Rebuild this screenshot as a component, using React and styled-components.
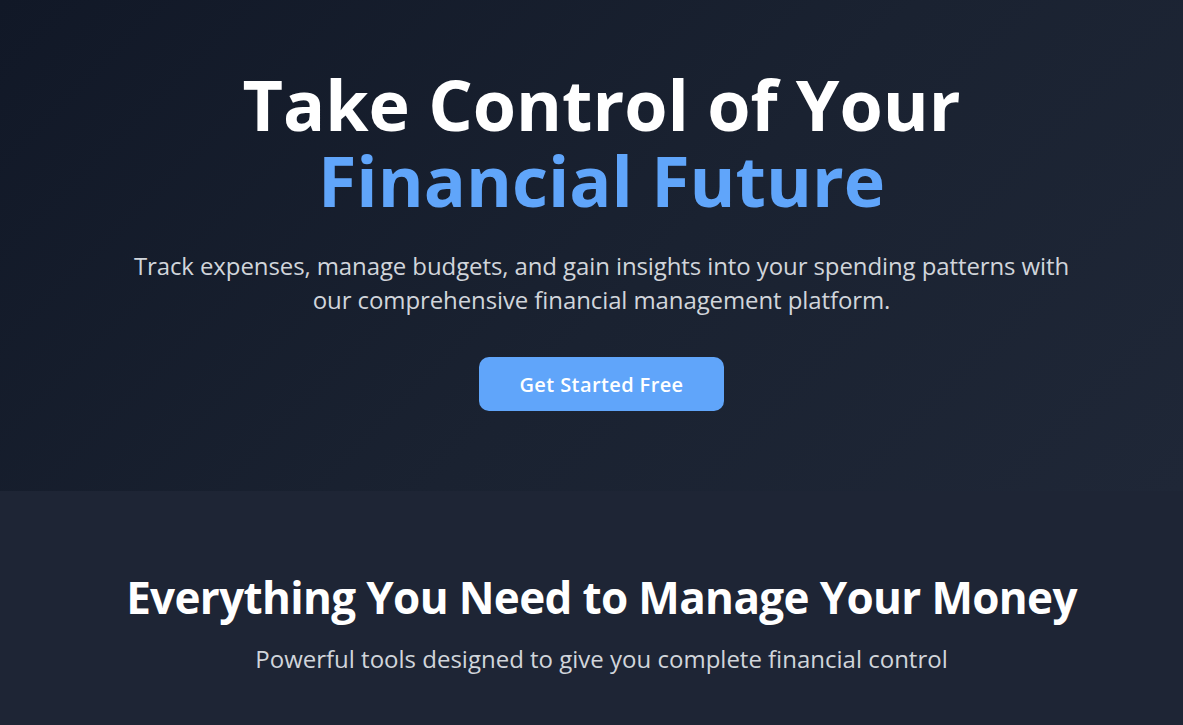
import styled, { createGlobalStyle } from "styled-components";

const GlobalStyle = createGlobalStyle`
  html, body {
    margin: 0;
    padding: 0;
    background: #1e2535;
  }
  body {
    font-family: "Open Sans", "Noto Sans", sans-serif;
    color: #ffffff;
  }
  * {
    box-sizing: border-box;
  }
`;

const Hero = styled.section`
  height: 491px;
  padding: 66px 0 0 20px;
  display: flex;
  flex-direction: column;
  align-items: center;
  text-align: center;
  background: linear-gradient(135deg, #111827 0%, #1a2231 55%, #1f2737 100%);
`;

const Title = styled.h1`
  margin: 0;
  font-size: 70px;
  line-height: 76px;
  font-weight: 700;
  letter-spacing: 0;
  color: #ffffff;
`;

const Accent = styled.span`
  display: block;
  color: #60a5fa;
`;

const Lead = styled.p`
  margin: 31px 0 0;
  max-width: 950px;
  font-size: 24px;
  line-height: 34px;
  letter-spacing: -0.1px;
  color: #d1d5db;
`;

const PrimaryButton = styled.button`
  margin-top: 40px;
  width: 245px;
  height: 54px;
  border: none;
  border-radius: 10px;
  background: #60a5fa;
  color: #ffffff;
  font-family: inherit;
  font-size: 20px;
  font-weight: 600;
  letter-spacing: 0.4px;
  cursor: pointer;
`;

const Features = styled.section`
  padding: 78px 0 0 20px;
  display: flex;
  flex-direction: column;
  align-items: center;
  text-align: center;
  background: #1e2535;
  min-height: 234px;
`;

const SectionTitle = styled.h2`
  margin: 0;
  font-size: 44px;
  line-height: 56px;
  font-weight: 700;
  letter-spacing: -0.65px;
`;

const SectionLead = styled.p`
  margin: 18px 0 0;
  font-size: 24px;
  line-height: 32px;
  color: #d1d5db;
`;

export default function App() {
  return (
    <>
      <GlobalStyle />
      <Hero>
        <Title>
          Take Control of Your
          <Accent>Financial Future</Accent>
        </Title>
        <Lead>
          Track expenses, manage budgets, and gain insights into your spending
          patterns with our comprehensive financial management platform.
        </Lead>
        <PrimaryButton>Get Started Free</PrimaryButton>
      </Hero>
      <Features>
        <SectionTitle>Everything You Need to Manage Your Money</SectionTitle>
        <SectionLead>
          Powerful tools designed to give you complete financial control
        </SectionLead>
      </Features>
    </>
  );
}
